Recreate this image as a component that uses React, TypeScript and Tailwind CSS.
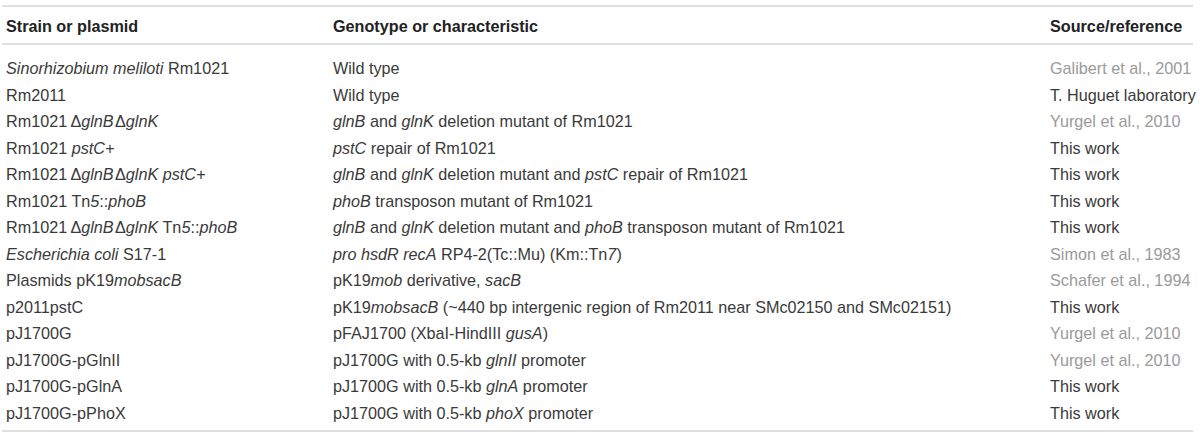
import type { ReactNode } from "react";

type Row = {
  strain: ReactNode;
  genotype: ReactNode;
  source: string;
  cited?: boolean;
};

const I = ({ children }: { children: ReactNode }) => <i>{children}</i>;

const rows: Row[] = [
  {
    strain: (
      <>
        <I>Sinorhizobium meliloti</I> Rm1021
      </>
    ),
    genotype: "Wild type",
    source: "Galibert et al., 2001",
    cited: true,
  },
  { strain: "Rm2011", genotype: "Wild type", source: "T. Huguet laboratory" },
  {
    strain: (
      <>
        Rm1021{"\u2009"}Δ<I>glnB</I>{"\u200a"}Δ<I>glnK</I>
      </>
    ),
    genotype: (
      <>
        <I>glnB</I> and <I>glnK</I> deletion mutant of Rm1021
      </>
    ),
    source: "Yurgel et al., 2010",
    cited: true,
  },
  {
    strain: (
      <>
        Rm1021 <I>pstC+</I>
      </>
    ),
    genotype: (
      <>
        <I>pstC</I> repair of Rm1021
      </>
    ),
    source: "This work",
  },
  {
    strain: (
      <>
        Rm1021{"\u2009"}Δ<I>glnB</I>{"\u200a"}Δ<I>glnK pstC+</I>
      </>
    ),
    genotype: (
      <>
        <I>glnB</I> and <I>glnK</I> deletion mutant and <I>pstC</I> repair of
        Rm1021
      </>
    ),
    source: "This work",
  },
  {
    strain: (
      <>
        Rm1021 Tn<I>5</I>::<I>phoB</I>
      </>
    ),
    genotype: (
      <>
        <I>phoB</I> transposon mutant of Rm1021
      </>
    ),
    source: "This work",
  },
  {
    strain: (
      <>
        Rm1021{"\u2009"}Δ<I>glnB</I>{"\u200a"}Δ<I>glnK</I> Tn<I>5</I>::<I>phoB</I>
      </>
    ),
    genotype: (
      <>
        <I>glnB</I> and <I>glnK</I> deletion mutant and <I>phoB</I> transposon
        mutant of Rm1021
      </>
    ),
    source: "This work",
  },
  {
    strain: (
      <>
        <I>Escherichia coli</I> S17-1
      </>
    ),
    genotype: (
      <>
        <I>pro hsdR recA</I> RP4-2(Tc::Mu) (Km::Tn<I>7</I>)
      </>
    ),
    source: "Simon et al., 1983",
    cited: true,
  },
  {
    strain: (
      <>
        Plasmids pK19<I>mobsacB</I>
      </>
    ),
    genotype: (
      <>
        pK19<I>mob</I> derivative, <I>sacB</I>
      </>
    ),
    source: "Schafer et al., 1994",
    cited: true,
  },
  {
    strain: "p2011pstC",
    genotype: (
      <>
        pK19<I>mobsacB</I> (~440 bp intergenic region of Rm2011 near SMc02150
        and SMc02151)
      </>
    ),
    source: "This work",
  },
  {
    strain: "pJ1700G",
    genotype: (
      <>
        pFAJ1700 (XbaI-HindIII <I>gusA</I>)
      </>
    ),
    source: "Yurgel et al., 2010",
    cited: true,
  },
  {
    strain: "pJ1700G-pGlnII",
    genotype: (
      <>
        pJ1700G with 0.5-kb <I>glnII</I> promoter
      </>
    ),
    source: "Yurgel et al., 2010",
    cited: true,
  },
  {
    strain: "pJ1700G-pGlnA",
    genotype: (
      <>
        pJ1700G with 0.5-kb <I>glnA</I> promoter
      </>
    ),
    source: "This work",
  },
  {
    strain: "pJ1700G-pPhoX",
    genotype: (
      <>
        pJ1700G with 0.5-kb <I>phoX</I> promoter
      </>
    ),
    source: "This work",
  },
];

const cols = "grid grid-cols-[327px_717px_1fr]";

const App = () => {
  return (
    <div className="w-[1200px] h-[440px] bg-white pt-[5px] pl-[2px] font-['Liberation_Sans',Arial,sans-serif] text-[16.2px] text-[#3a3a3a]">
      <div className="w-[1191px] border-t-2 border-b-2 border-[#e0e0e0]">
        {/* header */}
        <div className={`${cols} h-[38px] pt-[3px] items-center border-b-2 border-[#e0e0e0] font-bold text-[#222]`}>
          <div className="pl-[4px]">Strain or plasmid</div>
          <div className="pl-[4px]">Genotype or characteristic</div>
          <div className="pl-[4px]">Source/reference</div>
        </div>
        <div className="pt-[10px] pb-[4px]">
          {rows.map((row, idx) => (
            <div key={idx} className={`${cols} h-[26.5px] items-center whitespace-nowrap`}>
              <div className="pl-[4px]">{row.strain}</div>
              <div className="pl-[4px]">{row.genotype}</div>
              <div className={`pl-[4px] ${row.cited ? "text-[#9a9a9a]" : ""}`}>
                {row.source}
              </div>
            </div>
          ))}
        </div>
      </div>
    </div>
  );
};

export default App;
